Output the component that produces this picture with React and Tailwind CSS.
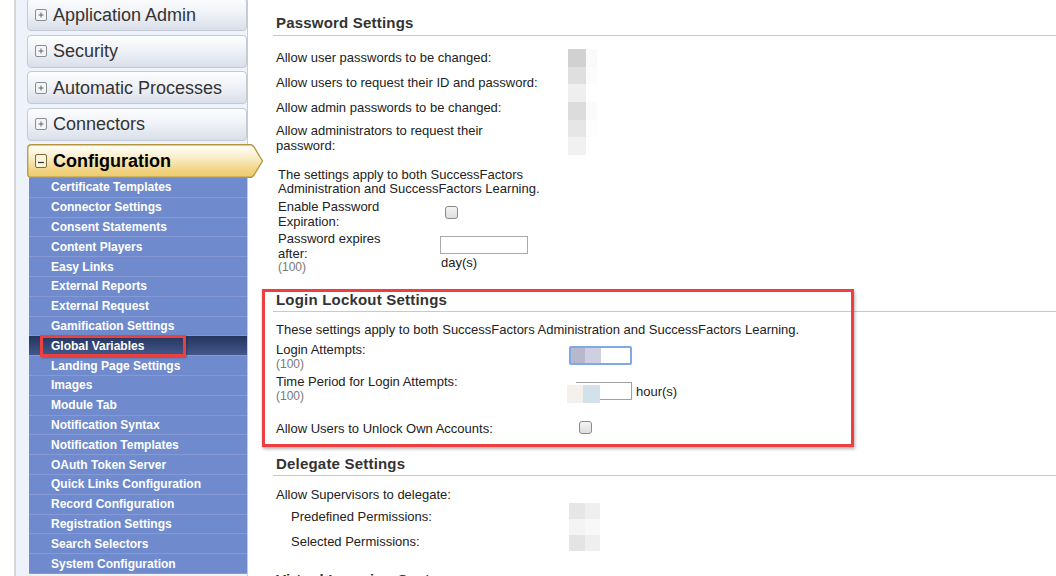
import React from "react";

const items = [
  "Certificate Templates",
  "Connector Settings",
  "Consent Statements",
  "Content Players",
  "Easy Links",
  "External Reports",
  "External Request",
  "Gamification Settings",
  "Global Variables",
  "Landing Page Settings",
  "Images",
  "Module Tab",
  "Notification Syntax",
  "Notification Templates",
  "OAuth Token Server",
  "Quick Links Configuration",
  "Record Configuration",
  "Registration Settings",
  "Search Selectors",
  "System Configuration",
];

function PlusIcon() {
  return (
    <svg width="12" height="12" viewBox="0 0 12 12" className="shrink-0">
      <rect x="0.5" y="0.5" width="11" height="11" rx="1.5" fill="#f3f4f6" stroke="#8a8d93" />
      <path d="M3.5 6h5M6 3.5v5" stroke="#666" strokeWidth="1" />
    </svg>
  );
}

function MinusIcon() {
  return (
    <svg width="12" height="14" viewBox="0 0 12 14" className="shrink-0">
      <rect x="0.5" y="0.5" width="11" height="13" rx="1.5" fill="#fbf3da" stroke="#7d6a3a" />
      <path d="M3 8.5h6" stroke="#333" strokeWidth="1.2" />
    </svg>
  );
}

function NavButton({ label }) {
  return (
    <div className="h-[33px] mb-[3.5px] flex items-center gap-[6px] pl-[7px] rounded-[4px] border border-[#c3cad6] bg-gradient-to-b from-[#fdfdfe] via-[#eef1f6] to-[#d9dfea] text-[18px] text-[#333] leading-none">
      <PlusIcon />
      <span>{label}</span>
    </div>
  );
}

function Checkbox() {
  return <div className="w-[13px] h-[13px] rounded-[3px] border border-[#8a8a8a] bg-gradient-to-b from-[#f4f4f4] to-[#dedede]" />;
}

export default function App() {
  return (
    <div className="w-[1056px] h-[576px] overflow-hidden flex bg-white font-['Liberation_Sans',Arial,sans-serif]">
      {/* Sidebar */}
      <div className="w-[248px] shrink-0 flex h-[576px]">
        <div className="w-[14px] shrink-0 bg-white" />
        <div className="flex-1 min-w-0 relative border-l-2 border-l-[#d4d7dc] border-r border-r-[#c9cbd0] bg-[#eef3fb] pl-[11px]">
          <div className="-mt-[2px]">
            <NavButton label="Application Admin" />
            <NavButton label="Security" />
            <NavButton label="Automatic Processes" />
            <NavButton label="Connectors" />
            <div className="relative z-10 h-[34px] w-[220px]">
              <svg width="237" height="34" viewBox="0 0 237 34" className="absolute left-0 top-0 max-w-none">
                <defs>
                  <linearGradient id="gold" x1="0" y1="0" x2="0" y2="1">
                    <stop offset="0" stopColor="#fffef9" />
                    <stop offset="0.35" stopColor="#fbf0cf" />
                    <stop offset="0.8" stopColor="#f1d27f" />
                    <stop offset="1" stopColor="#eccb72" />
                  </linearGradient>
                </defs>
                <path
                  d="M4 0.75 H224.5 L227 3 L235.5 17 L227 31 L224.5 33.25 H4 Q0.75 33.25 0.75 30 V4 Q0.75 0.75 4 0.75 Z"
                  fill="url(#gold)"
                  stroke="#b5963e"
                  strokeWidth="1.3"
                />
              </svg>
              <div className="relative h-full flex items-center gap-[6px] pl-[8px] text-[18px] font-bold text-black leading-none">
                <MinusIcon />
                <span>Configuration</span>
              </div>
            </div>
          </div>
          <div className="ml-[2px] bg-[#6f8bcd]">
            {items.map((it) => {
              const active = it === "Global Variables";
              return (
                <div
                  key={it}
                  className={
                    "h-[19.8px] flex items-center pl-[22px] text-[12px] font-bold text-white leading-none border-b border-[#8599d6] whitespace-nowrap " +
                    (active ? "bg-gradient-to-b from-[#25355f] to-[#44578a]" : "")
                  }
                >
                  {it}
                </div>
              );
            })}
          </div>
          {/* annotation on Global Variables */}
          <div className="absolute left-[24px] top-[335px] w-[146px] h-[22px] border-[3px] border-[#e8413f] shadow-[1px_1px_2px_rgba(0,0,0,0.25)]" />
        </div>
      </div>

      {/* Main */}
      <div className="relative flex-1 pl-[25px] pt-[14px] text-[13px] text-[#222]">
        <h2 className="pl-[3px] pb-[3px] border-b border-[#c4c9d8] text-[15px] font-bold leading-[18px] text-[#333] tracking-[0.2px]">
          Password Settings
        </h2>
        <div className="flex mt-[9.5px]">
          <div className="w-[295px] pl-[3px]">
            <div className="h-[25px] flex items-center">Allow user passwords to be changed:</div>
            <div className="h-[25px] flex items-center">Allow users to request their ID and password:</div>
            <div className="h-[25px] flex items-center">Allow admin passwords to be changed:</div>
            <div className="h-[35px] flex items-center leading-[15px]">
              Allow administrators to request their
              <br />
              password:
            </div>
          </div>
          <div className="pt-[3.5px] flex">
            <div className="w-[18px] flex flex-col">
              <div className="h-[17.7px] bg-[#d1d1d1]" />
              <div className="h-[17.7px] bg-[#dfdfdf]" />
              <div className="h-[17.7px] bg-[#efefef]" />
              <div className="h-[17.7px] bg-[#dcdcdc]" />
              <div className="h-[17.7px] bg-[#e6e6e6]" />
              <div className="h-[17.7px] bg-[#f1f1f1]" />
            </div>
            <div className="w-[11px] flex flex-col">
              <div className="h-[17.7px] bg-[#fafafa]" />
              <div className="h-[17.7px] bg-[#fcfcfc]" />
              <div className="h-[17.7px] bg-white" />
              <div className="h-[17.7px] bg-[#fbfbfb]" />
              <div className="h-[17.7px] bg-[#fdfdfd]" />
              <div className="h-[17.7px] bg-white" />
            </div>
          </div>
        </div>

        <div className="mt-[12px] pl-[5px] leading-[14.5px]">
          The settings apply to both SuccessFactors
          <br />
          Administration and SuccessFactors Learning.
        </div>
        <div className="flex pl-[5px] mt-[2px] leading-[15px]">
          <div className="w-[162px]">
            Enable Password
            <br />
            Expiration:
          </div>
          <div className="pl-[5px] pt-[7.5px]">
            <Checkbox />
          </div>
        </div>
        <div className="flex pl-[5px] mt-[2px] leading-[15px]">
          <div className="w-[162px]">
            Password expires
            <br />
            after:
            <div className="text-[12px] leading-[13px] text-[#777]">(100)</div>
          </div>
          <div className="pt-[5.5px]">
            <div className="w-[88px] h-[18px] border border-[#a9a9a9] bg-white" />
            <div className="pl-[1px] mt-[0.5px]">day(s)</div>
          </div>
        </div>

        {/* Login Lockout */}
        <h2 className="mt-[17px] pl-[3px] pb-[2px] border-b border-[#c4c9d8] text-[15px] font-bold leading-[18px] text-[#333] tracking-[0.2px]">
          Login Lockout Settings
        </h2>
        <div className="mt-[10.5px] pl-[3px] leading-[15px]">
          These settings apply to both SuccessFactors Administration and SuccessFactors Learning.
        </div>
        <div className="flex pl-[3px] mt-[5px]">
          <div className="w-[293px] leading-[15px]">
            Login Attempts:
            <div className="text-[12px] leading-[14px] text-[#777]">(100)</div>
          </div>
          <div className="pt-[3.5px]">
            <div className="w-[63px] h-[19px] border-2 border-[#7fa8e4] rounded-[2px] bg-white flex overflow-hidden">
              <div className="w-[14px] h-full bg-[#b8b8cc]" />
              <div className="w-[16px] h-full bg-[#cfcfe2]" />
            </div>
          </div>
        </div>
        <div className="flex pl-[3px] mt-[3px]">
          <div className="w-[293px] leading-[15px]">
            Time Period for Login Attempts:
            <div className="text-[12px] leading-[14px] text-[#777]">(100)</div>
          </div>
          <div className="pt-[5.5px] flex items-center gap-[4px] -ml-[2px]">
            <div className="relative w-[65px] h-[18px] flex">
              <div className="w-[16px] h-full bg-[#f4f1ec] mt-[3px]" />
              <div className="w-[17px] h-full bg-[#d3e1ea] mt-[3px]" />
              <div className="flex-1 border border-[#a0a0a0] border-l-0" />
              <div className="absolute left-[9px] top-0 w-[24px] border-t border-[#a0a0a0]" />
            </div>
            <span>hour(s)</span>
          </div>
        </div>
        <div className="flex pl-[3px] mt-[18px] items-center">
          <div className="w-[293px] leading-[15px]">Allow Users to Unlock Own Accounts:</div>
          <div className="pl-[10px] -mt-[2px]">
            <Checkbox />
          </div>
        </div>

        {/* Delegate */}
        <h2 className="mt-[18.5px] pl-[3px] pb-[2px] border-b border-[#c4c9d8] text-[15px] font-bold leading-[18px] text-[#333] tracking-[0.2px]">
          Delegate Settings
        </h2>
        <div className="mt-[11.5px] pl-[3px] leading-[15px]">Allow Supervisors to delegate:</div>
        <div className="flex mt-[2px]">
          <div className="w-[296px] pl-[18px]">
            <div className="h-[25px] flex items-center">Predefined Permissions:</div>
            <div className="h-[25px] flex items-center">Selected Permissions:</div>
          </div>
          <div className="flex flex-col -mt-[1.5px]">
            <div className="flex h-[16px]">
              <div className="w-[16px] bg-[#e6e6e6]" />
              <div className="w-[15px] bg-[#efefef]" />
            </div>
            <div className="flex h-[16px]">
              <div className="w-[16px] bg-[#f4f4f4]" />
              <div className="w-[15px] bg-[#f8f8f8]" />
            </div>
            <div className="flex h-[16px]">
              <div className="w-[16px] bg-[#e4e4e4]" />
              <div className="w-[15px] bg-[#efefef]" />
            </div>
          </div>
        </div>
        <h2 className="mt-[16.5px] pl-[3px] pb-[2px] border-b border-[#c4c9d8] text-[15px] font-bold leading-[18px] text-[#333] tracking-[0.2px]">
          Virtual Learning System
        </h2>

        {/* annotation box */}
        <div className="absolute left-[14px] top-[289px] w-[592px] h-[158px] border-[3px] border-[#ee3e40] shadow-[1px_2px_3px_rgba(0,0,0,0.3)]" />
      </div>
    </div>
  );
}
